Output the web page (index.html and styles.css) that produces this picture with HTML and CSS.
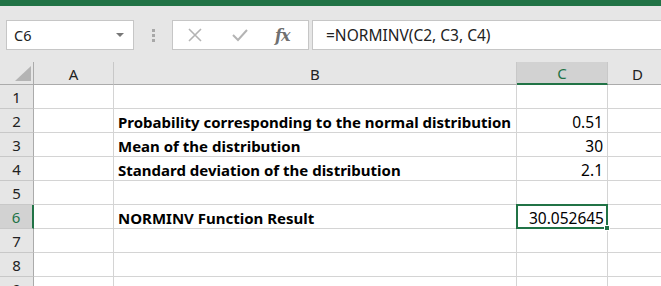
FILE: index.html
```html
<!DOCTYPE html>
<html lang="en">
<head>
    <meta charset="UTF-8">
    <title>NORMINV</title>
    <link rel="stylesheet" href="styles.css">
</head>
<body>

    <div class="titlebar"></div>

    <div class="formula-bar">
        <div class="name-box">
            <span>C6</span>
            <span class="caret"></span>
        </div>
        <div class="grip">
            <i></i><i></i><i></i>
        </div>
        <div class="fx-buttons">
            <svg width="16" height="14" viewBox="0 0 16 14">
                <path d="M2 1 L14 13 M14 1 L2 13" stroke="#b4b4b4" stroke-width="1.6" fill="none"/>
            </svg>
            <svg width="16" height="14" viewBox="0 0 16 14">
                <path d="M1 7 L6 12 L15 2" stroke="#b4b4b4" stroke-width="2" fill="none"/>
            </svg>
            <span class="fx">fx</span>
        </div>
        <div class="formula-input">=NORMINV(C2, C3, C4)</div>
    </div>

    <div class="sheet">
        <div class="corner"><span class="tri"></span></div>
        <div class="col-head">A</div>
        <div class="col-head">B</div>
        <div class="col-head active">C</div>
        <div class="col-head">D</div>

        <div class="row-head">1</div>
        <div class="cell"></div>
        <div class="cell"></div>
        <div class="cell"></div>
        <div class="cell"></div>

        <div class="row-head">2</div>
        <div class="cell"></div>
        <div class="cell label">Probability corresponding to the normal distribution</div>
        <div class="cell num">0.51</div>
        <div class="cell"></div>

        <div class="row-head">3</div>
        <div class="cell"></div>
        <div class="cell label">Mean of the distribution</div>
        <div class="cell num">30</div>
        <div class="cell"></div>

        <div class="row-head">4</div>
        <div class="cell"></div>
        <div class="cell label">Standard deviation of the distribution</div>
        <div class="cell num">2.1</div>
        <div class="cell"></div>

        <div class="row-head">5</div>
        <div class="cell"></div>
        <div class="cell"></div>
        <div class="cell"></div>
        <div class="cell"></div>

        <div class="row-head active">6</div>
        <div class="cell"></div>
        <div class="cell label">NORMINV Function Result</div>
        <div class="cell num selected">30.052645<span class="handle"></span></div>
        <div class="cell"></div>

        <div class="row-head">7</div>
        <div class="cell"></div>
        <div class="cell"></div>
        <div class="cell"></div>
        <div class="cell"></div>

        <div class="row-head">8</div>
        <div class="cell"></div>
        <div class="cell"></div>
        <div class="cell"></div>
        <div class="cell"></div>

        <div class="row-head">9</div>
        <div class="cell"></div>
        <div class="cell"></div>
        <div class="cell"></div>
        <div class="cell"></div>
    </div>

</body>
</html>
```

FILE: styles.css
```css
* {
    padding: 0;
    margin: 0;
    box-sizing: border-box;
}

body {
    background-color: #ffffff;
    font-family: "Noto Sans", Arial, sans-serif;
    color: #000;
    overflow: hidden;
    height: 286px;
}

.titlebar {
    height: 6px;
    background-color: #217346;
}

.formula-bar {
    height: 56px;
    background-color: #e6e6e6;
    display: flex;
    align-items: flex-start;
    padding-top: 14px;
    padding-left: 6px;
}

.name-box, .fx-buttons, .formula-input {
    height: 30px;
    background-color: #fff;
    border: 1px solid #c6c6c6;
    display: flex;
    align-items: center;
}

.name-box {
    width: 128px;
    padding-left: 7px;
    padding-right: 9px;
    justify-content: space-between;
    font-size: 14.5px;
    color: #222;
}

.caret {
    width: 0;
    height: 0;
    border-left: 4px solid transparent;
    border-right: 4px solid transparent;
    border-top: 4px solid #777;
}

.grip {
    width: 38px;
    height: 30px;
    display: flex;
    flex-direction: column;
    align-items: center;
    justify-content: center;
    gap: 2px;
}

.grip i {
    width: 3px;
    height: 3px;
    background-color: #a8a8a8;
}

.fx-buttons {
    width: 137px;
    padding-left: 14px;
    gap: 29px;
}

.fx {
    font-family: "DejaVu Serif", "Liberation Serif", serif;
    font-style: italic;
    font-weight: bold;
    font-size: 16px;
    color: #707070;
    letter-spacing: -1px;
    margin-left: -2px;
}

.formula-input {
    flex: 1;
    margin-left: 3px;
    border-right: none;
    padding-left: 13px;
    font-size: 15.5px;
    color: #222;
}

.sheet {
    display: grid;
    grid-template-columns: 34px 80px 403px 91px 60px;
    grid-auto-rows: 24px;
    grid-template-rows: 23px;
}

.corner, .col-head, .row-head {
    background-color: #e6e6e6;
    border-right: 1px solid #ababab;
    border-bottom: 1px solid #ababab;
    display: flex;
    align-items: center;
    justify-content: center;
    font-size: 15px;
    color: #222;
}

.col-head {
    border-right-color: #c8c8c8;
    padding-top: 1px;
}

.row-head {
    border-bottom-color: #c8c8c8;
    padding-top: 1px;
}

.corner {
    position: relative;
}

.tri {
    position: absolute;
    right: 2px;
    bottom: 3px;
    width: 0;
    height: 0;
    border-left: 16px solid transparent;
    border-bottom: 15px solid #b4b4b4;
}

.col-head.active {
    background-color: #d2d2d2;
    color: #217346;
    border-bottom: 2px solid #217346;
}

.row-head.active {
    background-color: #d2d2d2;
    color: #217346;
    border-right: 2px solid #217346;
}

.cell {
    border-right: 1px solid #d4d4d4;
    border-bottom: 1px solid #d4d4d4;
    display: flex;
    align-items: center;
    padding-top: 2px;
    font-size: 15px;
    white-space: nowrap;
}

.label {
    font-weight: bold;
    padding-left: 4px;
}

.num {
    justify-content: flex-end;
    padding-right: 4px;
    font-size: 15.5px;
}

.selected {
    position: relative;
    border: 2px solid #217346;
    margin: -1px 0 0 -1px;
    padding-right: 2px;
}

.handle {
    position: absolute;
    right: -4px;
    bottom: -4px;
    width: 6px;
    height: 6px;
    background-color: #217346;
    border: 1px solid #fff;
}
```
